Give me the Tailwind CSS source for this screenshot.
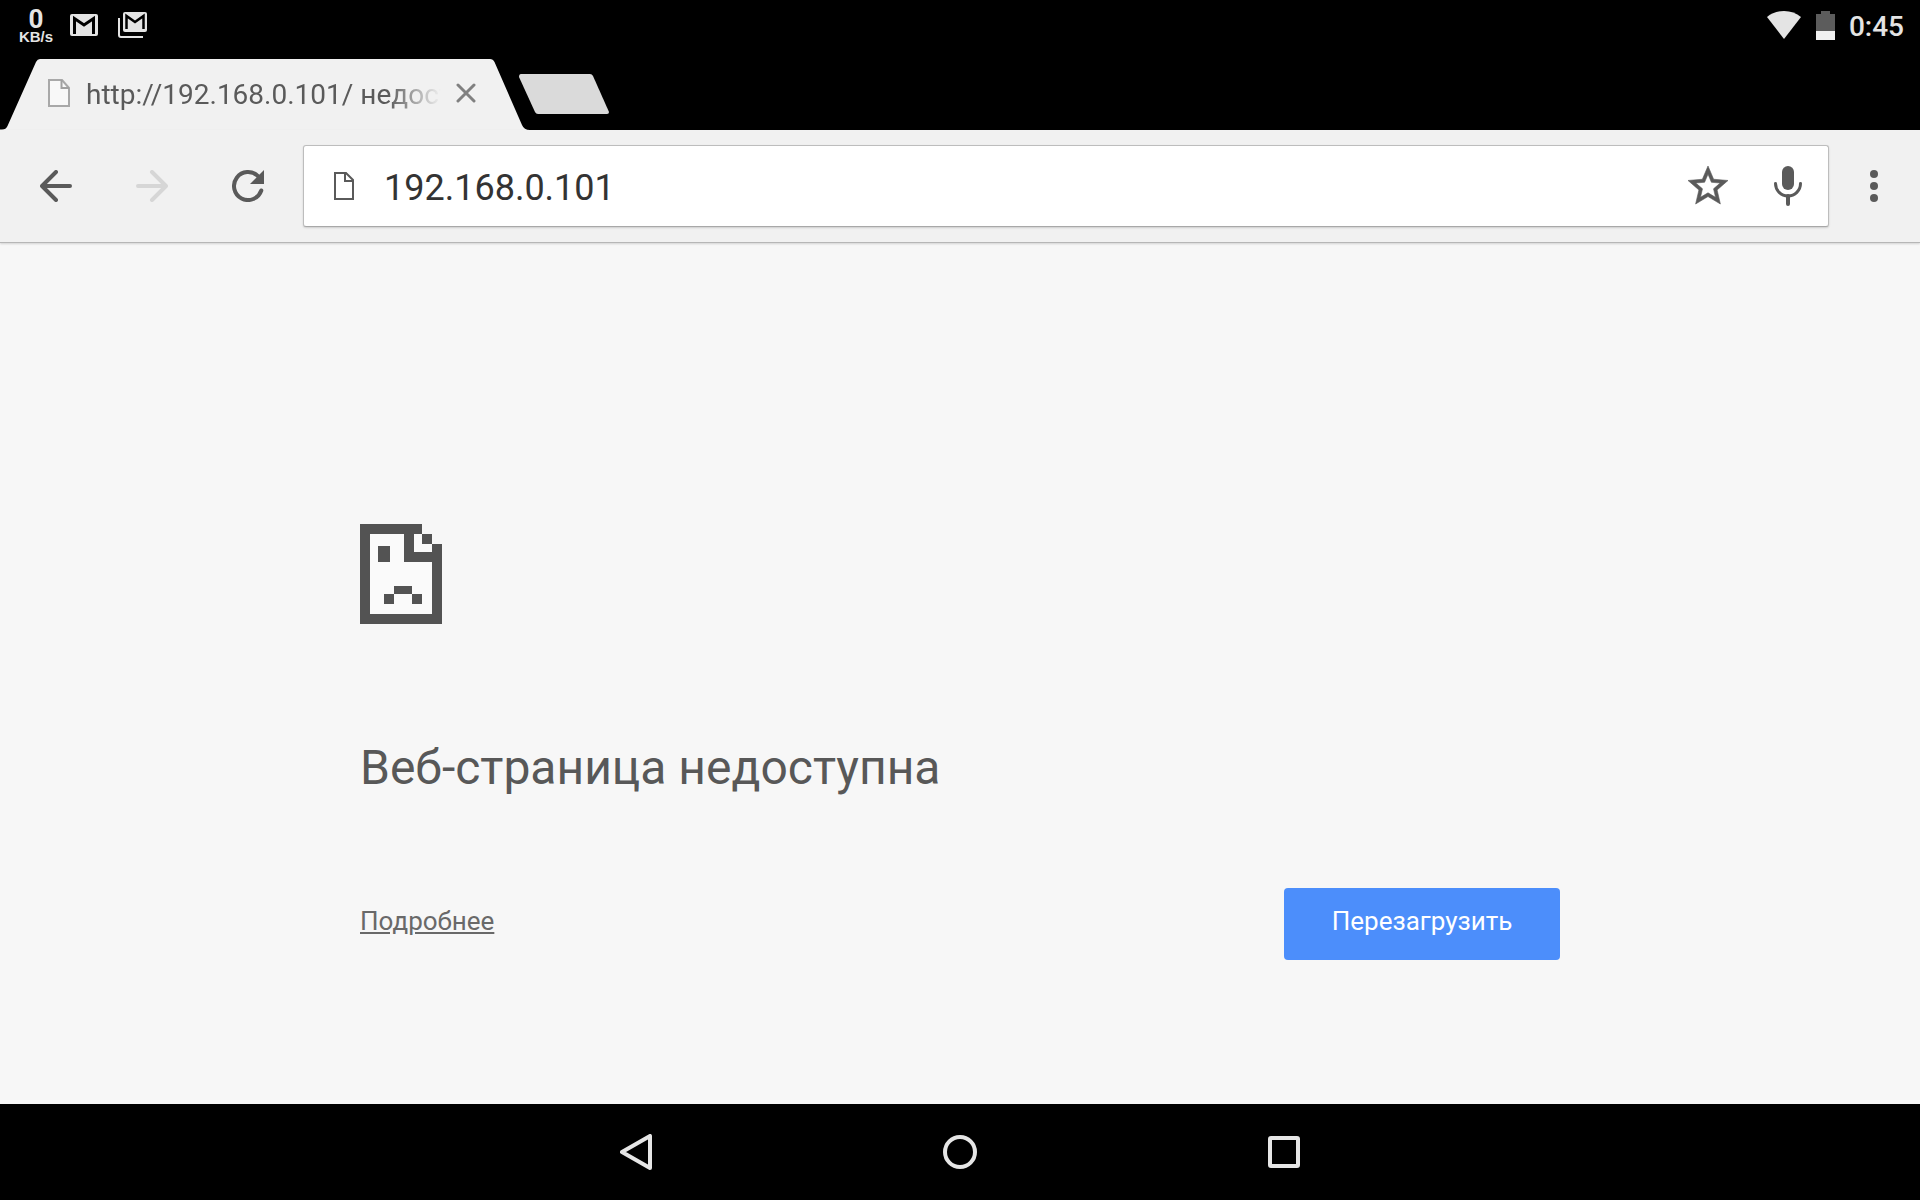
<!DOCTYPE html>
<html lang="ru">
  <head>
    <meta charset="UTF-8" />
    <meta name="viewport" content="width=device-width, initial-scale=1.0" />
    <title>http://192.168.0.101/ недоступен</title>
    <script src="https://cdn.jsdelivr.net/npm/@tailwindcss/browser@4"></script>
  </head>
  <body class="min-h-screen flex flex-col bg-[#f7f7f7] font-['Roboto','Liberation_Sans',sans-serif]">
    <!-- Status bar -->
    <div class="h-[50px] bg-black flex items-center justify-between pl-[18px] pr-4 text-[#e4e4e4]">
      <div class="flex items-center">
        <div class="w-9 flex flex-col items-center font-bold">
          <span class="text-[26px] leading-5 pt-1">0</span>
          <span class="text-[15px] leading-4 font-['Liberation_Sans',sans-serif]">KB/s</span>
        </div>
        <svg class="ml-4 w-7 h-[22px]" viewBox="0 0 28 22">
          <rect width="28" height="22" rx="2" fill="#e4e4e4" />
          <path d="M4.500 20V4.500L14 11L23.500 4.500V20" fill="none" stroke="#000" stroke-width="3" />
        </svg>
        <svg class="ml-5 w-[29px] h-[26px]" viewBox="0 0 29 26">
          <path d="M1 6V23a2 2 0 0 0 2 2H25" fill="none" stroke="#e4e4e4" stroke-width="2" />
          <rect x="5" width="24" height="20" rx="2" fill="#e4e4e4" />
          <path d="M8.500 17V4L17 10L25.500 4V17" fill="none" stroke="#000" stroke-width="2.500" />
        </svg>
      </div>
      <div class="flex items-center">
        <svg class="w-[34px] h-7" viewBox="0 0 34 28">
          <path d="M0 6Q7 0 17 0T34 6L17 28Z" fill="#e4e4e4" />
        </svg>
        <svg class="ml-[15px] w-[19px] h-[29px]" viewBox="0 0 19 29">
          <path d="M5 0H14V3H19V20H0V3H5Z" fill="#5c5c5c" />
          <path d="M0 20H19V29H0Z" fill="#f0f0f0" />
        </svg>
        <span class="ml-[14px] pt-1 text-[28px] leading-8 font-medium">0:45</span>
      </div>
    </div>

    <!-- Tab strip -->
    <div class="h-20 bg-black flex items-end">
      <div class="relative w-[531px] h-[71px] flex items-center pl-12 pb-1">
        <svg class="absolute inset-0 w-full h-full" viewBox="0 0 531 71">
          <path d="M0 71V70.500H2Q6 70.500 7.500 67L36 3Q37.500 0 40 0H490Q493 0 494.500 3L522 66Q524 71 530 71Z" fill="#f1f1f1" />
        </svg>
        <svg class="relative w-[22px] h-7" viewBox="0 0 22 28">
          <path d="M1 1H14L21 9V27H1Z" fill="#f8f8f8" stroke="#a8a8a8" stroke-width="2" />
          <path d="M13.500 1V9H21" fill="none" stroke="#a0a0a0" stroke-width="2" />
        </svg>
        <span class="relative ml-4 w-[355px] overflow-hidden whitespace-nowrap pt-1 text-[28px] leading-8 text-[#5a5a5a] mask-r-from-85% mask-r-to-100%">http://192.168.0.101/ недоступен</span>
        <button class="relative ml-[15px] w-5 h-5" aria-label="Закрыть вкладку">
          <svg class="w-5 h-5" viewBox="0 0 20 20">
            <path d="M2 2L18 18M18 2L2 18" stroke="#808080" stroke-width="3" stroke-linecap="round" />
          </svg>
        </button>
      </div>
      <button class="self-end -ml-3 mb-4 w-[90px] h-10" aria-label="Новая вкладка">
        <svg class="w-[90px] h-10" viewBox="0 0 90 40">
          <path d="M2 0H71Q73 0 74 2L90 38Q90 40 88 40H19Q17 40 16 38L0 3Q0 0 2 0Z" fill="#dadada" />
        </svg>
      </button>
    </div>

    <!-- Toolbar -->
    <div class="relative h-[113px] bg-[#f1f1f1] border-b border-[#b6b6b6] shadow-[0_1px_2px_rgba(0,0,0,0.15)] flex items-center pl-2">
      <button class="w-24 h-24 flex items-center justify-center" aria-label="Назад">
        <svg class="w-8 h-8" viewBox="0 0 32 32" fill="none" stroke="#5a5a5a" stroke-width="4" stroke-linecap="round" stroke-linejoin="round">
          <path d="M16 2L2 16L16 30M3 16H30" />
        </svg>
      </button>
      <button class="w-24 h-24 flex items-center justify-center" aria-label="Вперёд" disabled>
        <svg class="w-8 h-8" viewBox="0 0 32 32" fill="none" stroke="#d6d6d6" stroke-width="4" stroke-linecap="round" stroke-linejoin="round">
          <path d="M16 2L30 16L16 30M29 16H2" />
        </svg>
      </button>
      <button class="w-24 h-24 flex items-center justify-center" aria-label="Обновить">
        <svg class="w-8 h-8" viewBox="0 0 32 32">
          <path d="M26 6.200A14 14 0 1 0 29.300 20.500" fill="none" stroke="#5a5a5a" stroke-width="4" stroke-linecap="round" />
          <path d="M32 0V14H18Z" fill="#5a5a5a" />
        </svg>
      </button>
      <div class="ml-[7px] flex-1 h-[82px] flex items-center bg-white border border-[#bdbdbd] border-b-[#a8a8a8] rounded-[3px] shadow-[0_1px_2px_rgba(0,0,0,0.15)] pl-[30px] pr-4">
        <svg class="w-5 h-7" viewBox="0 0 20 28" fill="none" stroke="#5a5a5a" stroke-width="2">
          <path d="M1 1H12L19 8V27H1Z" />
          <path d="M11 1V9H19" />
        </svg>
        <input type="text" value="192.168.0.101" aria-label="Адрес" class="ml-[30px] pt-1 flex-1 min-w-0 text-[36px] leading-10 text-[#333333] outline-none" />
        <button class="w-20 h-20 flex items-center justify-center" aria-label="Добавить в закладки">
          <svg class="w-12 h-12" viewBox="0 0 24 24" fill="#5a5a5a" stroke="#5a5a5a" stroke-width="0.300">
            <path d="M22 9.240l-7.190-.620L12 2 9.190 8.630 2 9.240l5.460 4.730L5.820 21 12 17.270 18.180 21l-1.630-7.030L22 9.240zM12 15.400l-3.760 2.270 1-4.280-3.320-2.880 4.380-.380L12 6.100l1.710 4.040 4.380.380-3.320 2.880 1 4.280L12 15.400z" />
          </svg>
        </button>
        <button class="w-12 ml-4 h-20 flex items-center justify-center" aria-label="Голосовой поиск">
          <svg class="w-7 h-10" viewBox="0 0 28 40">
            <rect x="8" width="12" height="24" rx="6" fill="#5a5a5a" />
            <path d="M1.500 17.500A12.500 12.500 0 0 0 26.500 17.500" fill="none" stroke="#5a5a5a" stroke-width="3" stroke-linecap="round" />
            <path d="M14 30V38" stroke="#5a5a5a" stroke-width="4" stroke-linecap="round" />
          </svg>
        </button>
      </div>
      <button class="w-[90px] mr-px h-24 flex items-center justify-center" aria-label="Меню">
        <svg class="w-8 h-8" viewBox="0 0 32 32" fill="#5a5a5a">
          <circle cx="16" cy="4" r="4" />
          <circle cx="16" cy="16" r="4" />
          <circle cx="16" cy="28" r="4" />
        </svg>
      </button>
    </div>

    <!-- Error page -->
    <main class="flex-1 w-full max-w-[1200px] mx-auto pt-[281px]">
      <svg class="w-[82px] h-[100px]" viewBox="0 0 246 300" shape-rendering="crispEdges">
        <path d="M30 30H132V114H216V270H30ZM162 30H186V60H216V84H162Z" fill="#fafafa" />
        <path d="M0 0H186V30H162V84H216V60H246V300H0ZM30 30V270H216V114H132V30Z" fill="#535353" fill-rule="evenodd" />
        <path d="M186 30h30v30h-30zM54 66h36v48h-36zM102 186h54v24h-54zM72 210h30v30h-30zM156 210h30v30h-30z" fill="#535353" />
      </svg>
      <h1 class="mt-[116px] text-[48px] leading-[56px] text-[#585858]">Веб-страница недоступна</h1>
      <div class="mt-[92px] flex items-start justify-between">
        <a href="#" class="mt-[17px] text-[26px] leading-8 text-[#696969] underline">Подробнее</a>
        <button class="w-[276px] h-[72px] pb-1.5 rounded-[4px] bg-[#4c8efb] text-[26px] leading-8 text-white">Перезагрузить</button>
      </div>
    </main>

    <!-- Navigation bar -->
    <nav class="h-24 bg-black flex items-center justify-center">
      <button class="w-[324px] h-24 flex items-center justify-center" aria-label="Назад">
        <svg class="w-8 h-9" viewBox="0 0 32 36">
          <path d="M2 18L30 2V34Z" fill="none" stroke="#e6e6e6" stroke-width="4" stroke-linejoin="round" />
        </svg>
      </button>
      <button class="w-[324px] h-24 flex items-center justify-center" aria-label="Домой">
        <svg class="w-[34px] h-[34px]" viewBox="0 0 34 34">
          <circle cx="17" cy="17" r="15" fill="none" stroke="#e6e6e6" stroke-width="4" />
        </svg>
      </button>
      <button class="w-[324px] h-24 flex items-center justify-center" aria-label="Обзор">
        <svg class="w-8 h-8" viewBox="0 0 32 32">
          <rect x="2" y="2" width="28" height="28" rx="1" fill="none" stroke="#e6e6e6" stroke-width="4" />
        </svg>
      </button>
    </nav>
  </body>
</html>
